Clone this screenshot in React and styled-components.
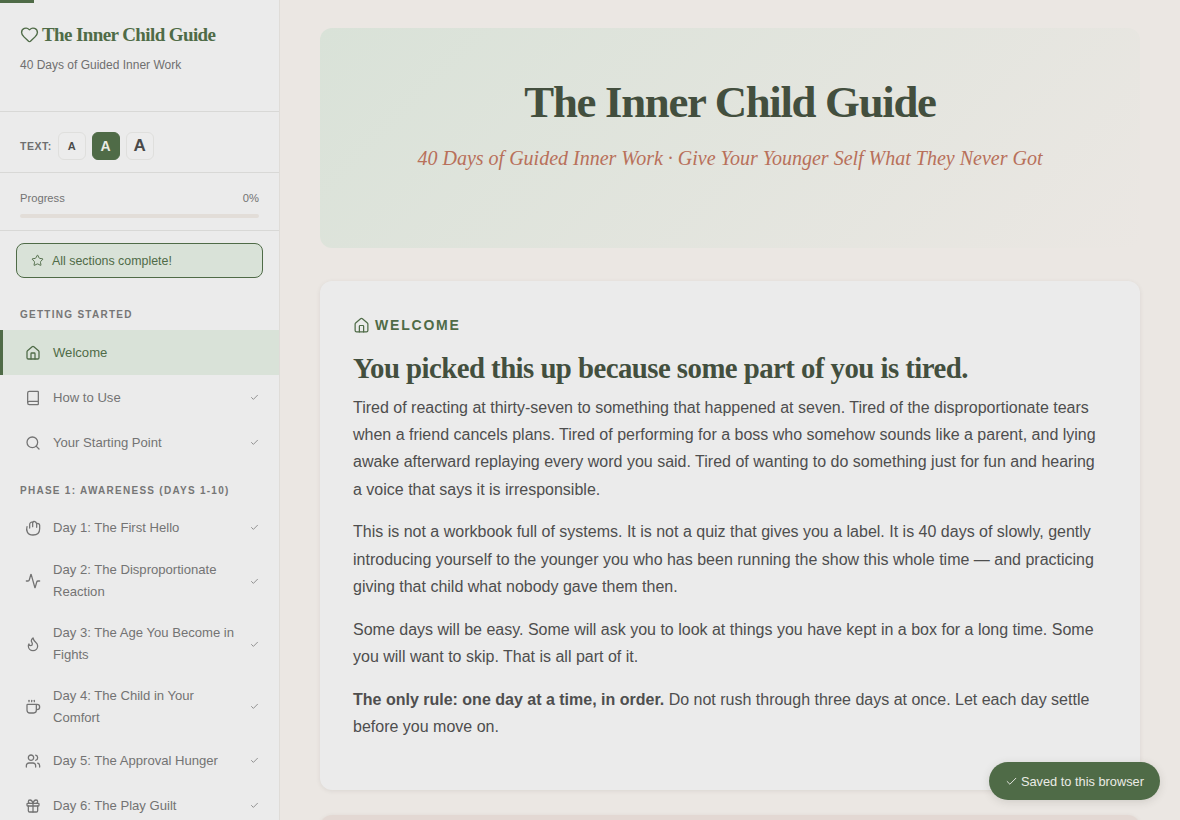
import React from 'react';
import styled, { createGlobalStyle } from 'styled-components';
import { Heart, Star, House, Book, Search, Activity, Flame, Coffee, Users, Gift, Check } from 'lucide-react';

const GlobalStyle = createGlobalStyle`
  html, body {
    margin: 0;
    padding: 0;
    background: #ebe7e3;
    font-family: "Liberation Sans", Arial, sans-serif;
  }
  * { box-sizing: border-box; }
`;

// lucide's hand has too many fingers at this size, the reference is a rounder mitten
const HandIcon = ({ size, strokeWidth }) => (
  <svg
    width={size}
    height={size}
    viewBox="0 0 24 24"
    fill="none"
    stroke="currentColor"
    strokeWidth={strokeWidth}
    strokeLinecap="round"
    strokeLinejoin="round"
  >
    <path d="M3 10C1.5 15 3 22.5 12 22.5c7 0 10-4.5 10-9.5V8c0-3-3.5-3.5-4.5-2-.5-3.5-4.5-5-6-2.5C9 2.5 7 4.5 7 7v5" />
    <path d="M17.5 6v5" />
    <path d="M11.5 3.500V10" />
  </svg>
);

const gettingStarted = [
  { icon: House, text: 'Welcome', active: true },
  { icon: Book, text: 'How to Use', done: true },
  { icon: Search, text: 'Your Starting Point', done: true },
];

const phaseOne = [
  { icon: HandIcon, text: 'Day 1: The First Hello', done: true },
  { icon: Activity, text: 'Day 2: The Disproportionate Reaction', done: true },
  { icon: Flame, text: 'Day 3: The Age You Become in Fights', done: true },
  { icon: Coffee, text: 'Day 4: The Child in Your Comfort', done: true },
  { icon: Users, text: 'Day 5: The Approval Hunger', done: true },
  { icon: Gift, text: 'Day 6: The Play Guilt', done: true },
];

const Page = styled.div`
  display: flex;
  height: 100vh;
  overflow: hidden;
  position: relative;
`;

const TopBar = styled.div`
  position: absolute;
  top: 0;
  left: 0;
  width: 34px;
  height: 3px;
  background: #4f6b47;
  z-index: 2;
`;

const Sidebar = styled.aside`
  width: 280px;
  flex-shrink: 0;
  height: 100%;
  overflow: hidden;
  background: #ebebeb;
  border-right: 1px solid #dfdcd8;
`;

const Brand = styled.div`
  height: 112px;
  padding: 23px 20px 0;
  border-bottom: 1px solid #d8d8d6;
`;

const BrandTitle = styled.div`
  display: flex;
  align-items: center;
  gap: 3px;
  font-family: "Liberation Serif", "Times New Roman", serif;
  font-weight: 700;
  font-size: 19px;
  line-height: 23px;
  color: #4f6b47;
  letter-spacing: -0.6px;
`;

const BrandSub = styled.div`
  margin-top: 12px;
  font-size: 12px;
  line-height: 14px;
  color: #6f6f6f;
`;

const TextRow = styled.div`
  height: 61px;
  display: flex;
  align-items: center;
  gap: 6px;
  padding: 8px 20px 0;
  border-bottom: 1px solid #d8d8d6;
`;

const TextLabel = styled.span`
  font-size: 10.5px;
  font-weight: 700;
  letter-spacing: 0.5px;
  color: #6f6f6f;
`;

const SizeButton = styled.button`
  width: 28px;
  height: 28px;
  border-radius: 6px;
  padding: 0;
  font-family: inherit;
  font-weight: 700;
  font-size: ${(p) => p.$size}px;
  border: 1px solid ${(p) => (p.$active ? '#4f6b47' : '#dfdfdd')};
  background: ${(p) => (p.$active ? '#4f6b47' : '#ececec')};
  color: ${(p) => (p.$active ? '#ebebe6' : '#4a4a4a')};
`;

const ProgressBlock = styled.div`
  height: 58px;
  padding: 19px 20px 0;
  border-bottom: 1px solid #d8d8d6;
`;

const ProgressRow = styled.div`
  display: flex;
  justify-content: space-between;
  font-size: 11.2px;
  line-height: 13px;
  color: #737373;
`;

const ProgressTrack = styled.div`
  margin-top: 9px;
  height: 4px;
  border-radius: 2px;
  background: #e2ddd8;
`;

const CompleteButton = styled.div`
  margin: 12px 16px 0;
  height: 35px;
  width: 247px;
  display: flex;
  align-items: center;
  gap: 8px;
  padding-left: 14px;
  font-size: 12.4px;
  color: #4f6b47;
  background: #d9e2d8;
  border: 1px solid #4f6b47;
  border-radius: 8px;
`;

const SectionLabel = styled.div`
  padding: 0 20px;
  font-size: 10px;
  font-weight: 700;
  letter-spacing: 1.27px;
  line-height: 12px;
  color: #767676;
  margin-top: ${(p) => p.$top}px;
  margin-bottom: ${(p) => p.$bottom}px;
`;

const NavItem = styled.div`
  display: flex;
  align-items: center;
  gap: 12px;
  min-height: 45px;
  padding: 9.35px 20px 9.35px 22px;
  border-left: 3px solid ${(p) => (p.$active ? '#4f6b47' : 'transparent')};
  background: ${(p) => (p.$active ? '#d9e2d8' : 'transparent')};
  color: ${(p) => (p.$active ? '#4f6b47' : '#737373')};
  font-size: 13.1px;
  line-height: 22px;
`;

const NavText = styled.span`
  flex: 1;
`;

const Main = styled.main`
  flex: 1;
  min-width: 0;
  padding: 28px 40px;
`;

const Hero = styled.header`
  height: 220px;
  border-radius: 12px;
  background: linear-gradient(135deg, #d9e2d8 0%, #ebe7e3 100%);
  text-align: center;
  padding-top: 46px;
`;

const HeroTitle = styled.h1`
  margin: 0;
  font-family: "Liberation Serif", "Times New Roman", serif;
  font-weight: 700;
  font-size: 44.8px;
  line-height: 56px;
  letter-spacing: -1.3px;
  color: #434f3e;
`;

const HeroSub = styled.p`
  margin: 15px 0 0;
  font-family: "Liberation Serif", "Times New Roman", serif;
  font-style: italic;
  font-size: 20px;
  line-height: 26px;
  color: #b8705a;
`;

const Card = styled.section`
  margin-top: ${(p) => p.$top}px;
  background: ${(p) => (p.$tint ? '#e3d8d3' : '#ebebeb')};
  border-radius: 12px;
  box-shadow: 0 1px 4px rgba(80, 70, 60, 0.1);
  padding: 33px;
  min-height: ${(p) => p.$height}px;
`;

const Eyebrow = styled.div`
  display: flex;
  align-items: center;
  gap: 5px;
  font-size: 14px;
  font-weight: 700;
  letter-spacing: 1.8px;
  line-height: 22px;
  color: #4f6b47;
`;

const CardTitle = styled.h2`
  margin: 14px 0 8px;
  font-family: "Liberation Serif", "Times New Roman", serif;
  font-weight: 700;
  font-size: 28.8px;
  line-height: 36px;
  letter-spacing: -0.54px;
  color: #434f3e;
`;

const Para = styled.p`
  margin: 0 0 15.6px;
  font-size: 16px;
  line-height: 27.2px;
  color: #4e4e4e;
`;

const Toast = styled.div`
  position: absolute;
  right: 20px;
  bottom: 20px;
  height: 38px;
  padding: 0 16px;
  display: flex;
  align-items: center;
  gap: 3px;
  background: #4f6b47;
  color: #ebebe6;
  font-size: 12.8px;
  border-radius: 19px;
  box-shadow: 0 2px 8px rgba(60, 60, 50, 0.15);
`;

const renderItem = (item) => {
  const Icon = item.icon;
  return (
    <NavItem key={item.text} $active={item.active}>
      <Icon size={16} strokeWidth={1.9} />
      <NavText>{item.text}</NavText>
      {item.done && <Check size={9} strokeWidth={2} />}
    </NavItem>
  );
};

export default function App() {
  return (
    <Page>
      <GlobalStyle />
      <TopBar />
      <Sidebar>
        <Brand>
          <BrandTitle>
            <Heart size={19} strokeWidth={1.75} />
            The Inner Child Guide
          </BrandTitle>
          <BrandSub>40 Days of Guided Inner Work</BrandSub>
        </Brand>
        <TextRow>
          <TextLabel>TEXT:</TextLabel>
          <SizeButton $size={11}>A</SizeButton>
          <SizeButton $size={14} $active>A</SizeButton>
          <SizeButton $size={17}>A</SizeButton>
        </TextRow>
        <ProgressBlock>
          <ProgressRow>
            <span>Progress</span>
            <span>0%</span>
          </ProgressRow>
          <ProgressTrack />
        </ProgressBlock>
        <CompleteButton>
          <Star size={13} strokeWidth={1.75} />
          All sections complete!
        </CompleteButton>
        <SectionLabel $top={31} $bottom={9}>GETTING STARTED</SectionLabel>
        {gettingStarted.map(renderItem)}
        <SectionLabel $top={20} $bottom={8}>PHASE 1: AWARENESS (DAYS 1-10)</SectionLabel>
        {phaseOne.map(renderItem)}
      </Sidebar>
      <Main>
        <Hero>
          <HeroTitle>The Inner Child Guide</HeroTitle>
          <HeroSub>40 Days of Guided Inner Work · Give Your Younger Self What They Never Got</HeroSub>
        </Hero>
        <Card $top={33} $height={509}>
          <Eyebrow>
            <House size={17} strokeWidth={1.75} />
            WELCOME
          </Eyebrow>
          <CardTitle>You picked this up because some part of you is tired.</CardTitle>
          <Para>
            Tired of reacting at thirty-seven to something that happened at seven. Tired of the disproportionate tears when a friend cancels plans. Tired of performing for a boss who somehow sounds like a parent, and lying awake afterward replaying every word you said. Tired of wanting to do something just for fun and hearing a voice that says it is irresponsible.
          </Para>
          <Para>
            This is not a workbook full of systems. It is not a quiz that gives you a label. It is 40 days of slowly, gently introducing yourself to the younger you who has been running the show this whole time — and practicing giving that child what nobody gave them then.
          </Para>
          <Para>
            Some days will be easy. Some will ask you to look at things you have kept in a box for a long time. Some you will want to skip. That is all part of it.
          </Para>
          <Para>
            <strong>The only rule: one day at a time, in order.</strong> Do not rush through three days at once. Let each day settle before you move on.
          </Para>
        </Card>
        <Card $tint $top={25} $height={200} />
      </Main>
      <Toast>
        <Check size={13} strokeWidth={1.75} />
        Saved to this browser
      </Toast>
    </Page>
  );
}
